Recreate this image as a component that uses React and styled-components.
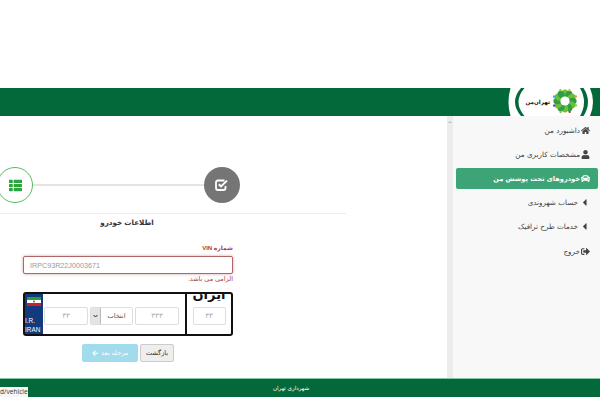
import React from 'react';
import styled, { createGlobalStyle } from 'styled-components';
import { FaHome, FaUser, FaCar, FaCaretLeft, FaSignOutAlt, FaThList, FaArrowLeft } from 'react-icons/fa';

const GlobalStyle = createGlobalStyle`
  html, body { margin: 0; padding: 0; background: #fff; }
  body { width: 600px; height: 418px; overflow: hidden; font-family: "Liberation Sans", "DejaVu Sans", sans-serif; }
`;

const TopSpace = styled.div`
  height: 88px;
`;

const Header = styled.header`
  height: 28px;
  background: #04693a;
  display: flex;
  justify-content: flex-end;
  overflow: hidden;
`;

const Body = styled.div`
  height: 262px;
  display: flex;
`;

const Main = styled.main`
  width: 447px;
  flex: none;
  background: #fff;
  overflow: hidden;
`;

const Stepper = styled.div`
  height: 98px;
  width: 346px;
  box-sizing: border-box;
  border-bottom: 1px solid #eeeeee;
  padding: 51px 106px 0 0;
  display: flex;
  align-items: flex-start;
  justify-content: flex-end;
`;

const StepTrack = styled.div`
  width: 243px;
  flex: none;
  display: flex;
  align-items: center;
`;

const StepCircle = styled.div`
  width: 36px;
  height: 36px;
  flex: none;
  box-sizing: border-box;
  border-radius: 50%;
  display: flex;
  align-items: center;
  justify-content: center;
  background: ${p => (p.$done ? '#757575' : '#fff')};
  border: ${p => (p.$done ? 'none' : '1.5px solid #52bd60')};
  color: ${p => (p.$done ? '#fff' : '#2ca53c')};
  font-size: 13px;
`;

const StepLine = styled.div`
  flex: 1;
  height: 2px;
  background: #e4e4e4;
`;

const Title = styled.h3`
  width: 254px;
  margin: 2px 0 0;
  font-size: 7.2px;
  line-height: 14px;
  font-weight: bold;
  color: #333;
  text-align: center;
`;

const Form = styled.form`
  width: 210px;
  margin: 0 0 0 23px;
  padding-top: 14px;
  direction: rtl;
`;

const Label = styled.label`
  display: block;
  font-size: 6px;
  line-height: 9px;
  font-weight: bold;
  color: #a94442;
  margin-bottom: 3px;
`;

const VinInput = styled.input`
  display: block;
  width: 100%;
  height: 18px;
  box-sizing: border-box;
  padding: 0 6px;
  direction: ltr;
  text-align: left;
  font: 7.2px "Liberation Sans", sans-serif;
  border: 1px solid #b06567;
  border-radius: 2px;
  box-shadow: 0 0 3px rgba(169, 68, 66, 0.5);
  outline: none;
  background: #fff;
  &::placeholder { color: #999; opacity: 1; }
`;

const ErrorText = styled.div`
  font-size: 6.5px;
  line-height: 9px;
  color: #a94442;
`;

const Plate = styled.div`
  height: 44px;
  margin-top: 9px;
  box-sizing: border-box;
  border: 2px solid #111;
  border-radius: 3px;
  display: flex;
  background: #fff;
`;

const PlateRegion = styled.div`
  width: 46px;
  flex: none;
  box-sizing: border-box;
  border-left: 2px solid #111;
  overflow: hidden;
  display: flex;
  flex-direction: column;
  align-items: center;
`;

const PlateCountry = styled.div`
  height: 16px;
  margin-top: -3px;
  font-size: 13px;
  line-height: 7px;
  font-weight: bold;
  color: #111;
`;

const PlateFields = styled.div`
  flex: 1;
  display: flex;
  align-items: flex-start;
  gap: 2px;
  padding: 13px 6px 0 0;
  min-width: 0;
`;

const PlateInput = styled.input`
  width: ${p => p.$w}px;
  height: 18px;
  flex: none;
  box-sizing: border-box;
  border: 1px solid #ddd;
  border-radius: 2px;
  text-align: center;
  font: 7px "DejaVu Sans", sans-serif;
  padding: 0;
  outline: none;
  &::placeholder { color: #aaa; opacity: 1; }
`;

const PlateSelectBox = styled.div`
  width: 43px;
  height: 18px;
  flex: none;
  box-sizing: border-box;
  border: 1px solid #ddd;
  border-radius: 2px;
  display: flex;
  overflow: hidden;
`;

const PlateSelectLabel = styled.div`
  flex: 1;
  font-size: 6.5px;
  line-height: 16px;
  color: #555;
  text-align: center;
`;

const PlateSelectArrow = styled.div`
  width: 9px;
  flex: none;
  background: #e4e4e4;
  border-right: 1px solid #bbb;
  display: flex;
  align-items: center;
  justify-content: center;
`;

const PlateBand = styled.div`
  width: 18px;
  flex: none;
  background: #123a7c;
  color: #fff;
  display: flex;
  flex-direction: column;
  direction: ltr;
  font: 6.4px/9px "Liberation Sans", sans-serif;
`;

const BandText = styled.div`
  margin-top: auto;
  white-space: nowrap;
`;

const Actions = styled.div`
  display: flex;
  justify-content: flex-start;
  gap: 2px;
  margin: 8px 59px 0 0;
`;

const Button = styled.button`
  height: 18px;
  box-sizing: border-box;
  padding: 0;
  width: ${p => (p.$primary ? 56 : 34)}px;
  font: 6.5px "DejaVu Sans", sans-serif;
  border-radius: 2px;
  border: 1px solid ${p => (p.$primary ? '#9fdcef' : '#ccc')};
  background: ${p => (p.$primary ? '#a2dbec' : '#eeeeee')};
  color: ${p => (p.$primary ? '#fff' : '#333')};
  display: flex;
  align-items: center;
  justify-content: center;
  gap: 3px;
`;

const Scrollbar = styled.div`
  width: 6px;
  flex: none;
  background: #ececec;
  position: relative;
  &::before {
    content: '';
    position: absolute;
    top: 3px;
    left: 1px;
    border: 2px solid transparent;
    border-bottom-color: #bdbdbd;
  }
`;

const Sidebar = styled.nav`
  flex: 1;
  background: #f8f8f8;
  direction: rtl;
  padding: 2px 2px 0 0;
  box-sizing: border-box;
  font-family: "DejaVu Sans", sans-serif;
`;

const NavItem = styled.a`
  height: ${p => (p.$active ? 21 : 24.5)}px;
  margin: ${p => (p.$active ? '1px 0 1px 3px' : '0 0 0 3px')};
  padding-right: 8px;
  display: flex;
  align-items: center;
  gap: 1px;
  font-size: ${p => (p.$active ? 6.6 : 7.2)}px;
  font-weight: ${p => (p.$active ? 'bold' : 'normal')};
  color: ${p => (p.$active ? '#fff' : '#444')};
  background: ${p => (p.$active ? '#3da477' : 'transparent')};
  border-radius: 2px;
  white-space: nowrap;
  & svg { font-size: ${p => (p.$caret ? 11 : 9)}px; flex: none; color: ${p => (p.$active ? '#fff' : '#444')}; }
`;

const Footer = styled.footer`
  height: 19px;
  background: #04693a;
  border-top: 1px solid #7fc9a0;
  box-sizing: border-box;
  position: relative;
  display: flex;
  align-items: center;
  justify-content: center;
  color: #fff;
  font-family: "DejaVu Sans", sans-serif;
  font-size: 5.6px;
  direction: rtl;
  padding-right: 18px;
`;

const StatusTip = styled.div`
  position: absolute;
  left: 0;
  bottom: 0;
  width: 28px;
  height: 10px;
  box-sizing: border-box;
  padding-right: 2px;
  background: #f6f6f6;
  color: #333;
  font: 6.6px/10px "Open Sans", sans-serif;
  direction: ltr;
  text-align: right;
  overflow: hidden;
  white-space: nowrap;
`;

const LogoText = styled.text`
  font-family: "DejaVu Sans", sans-serif;
  font-size: 5.6px;
  font-weight: bold;
  fill: #111;
`;

const petals = [0, 1, 2, 3, 4, 5, 6, 7, 8, 9, 10, 11];
const dots = ['#e8c22c', '#f08a24', '#8cc63f', '#d8342c', '#8cc63f', '#7a3fa0', '#3aa7dc', '#8cc63f'];

function Logo() {
  return (
    <svg width="100" height="28" viewBox="0 0 100 28" style={{ flex: 'none' }}>
      <path d="M10.5 0 L90 0 Q96 14 90 28 L10.5 28 Q6.5 14 10.5 0 Z" fill="#fff" />
      <path d="M21 0 Q9 14 21 28 L24.5 28 Q12.5 14 24.5 0 Z" fill="#04693a" />
      <path d="M80 0 Q88 14 80 28 L83.5 28 Q92.5 14 83.5 0 Z" fill="#04693a" />
      <g transform="translate(65 13)">
        {petals.map(i => (
          <ellipse key={i} cx="0" cy="-7.6" rx="3.2" ry="4" fill={i % 2 ? '#2f9e44' : '#6cbf3a'} transform={`rotate(${i * 30})`} />
        ))}
        {dots.map((c, i) => (
          <circle key={i} cx="0" cy="-11.8" r="1.2" fill={c} transform={`rotate(${i * 45 + 22})`} />
        ))}
        <circle r="4.6" fill="#fff" />
      </g>
      <LogoText x="50" y="16" direction="rtl">تهران‌من</LogoText>
    </svg>
  );
}

function CheckBoxIcon() {
  return (
    <svg width="14" height="12" viewBox="0 0 14 12">
      <path d="M9.5 1.5 H3 Q1 1.5 1 3.5 V9 Q1 11 3 11 H8.5 Q10.5 11 10.5 9 V7" fill="none" stroke="#fff" strokeWidth="1.8" />
      <path d="M3.8 5.2 L6 7.4 L12 1.6" fill="none" stroke="#fff" strokeWidth="2" />
    </svg>
  );
}

function Flag() {
  return (
    <svg width="14" height="9" viewBox="0 0 14 9" style={{ alignSelf: 'center', marginTop: 3 }}>
      <rect width="14" height="3" fill="#239f40" />
      <rect y="3" width="14" height="3" fill="#fff" />
      <rect y="6" width="14" height="3" fill="#c8202c" />
      <circle cx="7" cy="4.5" r="0.9" fill="#c8202c" />
    </svg>
  );
}

export default function App() {
  return (
    <>
      <GlobalStyle />
      <TopSpace />
      <Header><Logo /></Header>
      <Body>
        <Main>
          <Stepper>
            <StepTrack>
              <StepCircle><FaThList /></StepCircle>
              <StepLine />
              <StepCircle $done><CheckBoxIcon /></StepCircle>
            </StepTrack>
          </Stepper>
          <Title>اطلاعات خودرو</Title>
          <Form onSubmit={e => e.preventDefault()}>
            <Label>شماره VIN</Label>
            <VinInput placeholder="IRPC93R22J0003671" />
            <ErrorText>الزامی می باشد.</ErrorText>
            <Plate>
              <PlateRegion>
                <PlateCountry>ایران</PlateCountry>
                <PlateInput $w={33} placeholder="۳۳" />
              </PlateRegion>
              <PlateFields>
                <PlateInput $w={44} placeholder="۳۳۳" />
                <PlateSelectBox>
                  <PlateSelectLabel>انتخاب</PlateSelectLabel>
                  <PlateSelectArrow>
                    <svg width="5" height="4" viewBox="0 0 5 4"><path d="M0.5 1 L2.5 3 L4.5 1" fill="none" stroke="#222" strokeWidth="1" /></svg>
                  </PlateSelectArrow>
                </PlateSelectBox>
                <PlateInput $w={44} placeholder="۳۳" />
              </PlateFields>
              <PlateBand>
                <Flag />
                <BandText>I.R.<br />IRAN</BandText>
              </PlateBand>
            </Plate>
            <Actions>
              <Button type="button">بازگشت</Button>
              <Button type="button" $primary>مرحله بعد <FaArrowLeft /></Button>
            </Actions>
          </Form>
        </Main>
        <Scrollbar />
        <Sidebar>
          <NavItem><FaHome /> داشبورد من</NavItem>
          <NavItem><FaUser /> مشخصات کاربری من</NavItem>
          <NavItem $active><FaCar /> خودروهای تحت پوشش من</NavItem>
          <NavItem $caret><FaCaretLeft /> حساب شهروندی</NavItem>
          <NavItem $caret><FaCaretLeft /> خدمات طرح ترافیک</NavItem>
          <NavItem><FaSignOutAlt /> خروج</NavItem>
        </Sidebar>
      </Body>
      <Footer>
        شهرداری تهران
        <StatusTip>d/vehicle</StatusTip>
      </Footer>
    </>
  );
}
